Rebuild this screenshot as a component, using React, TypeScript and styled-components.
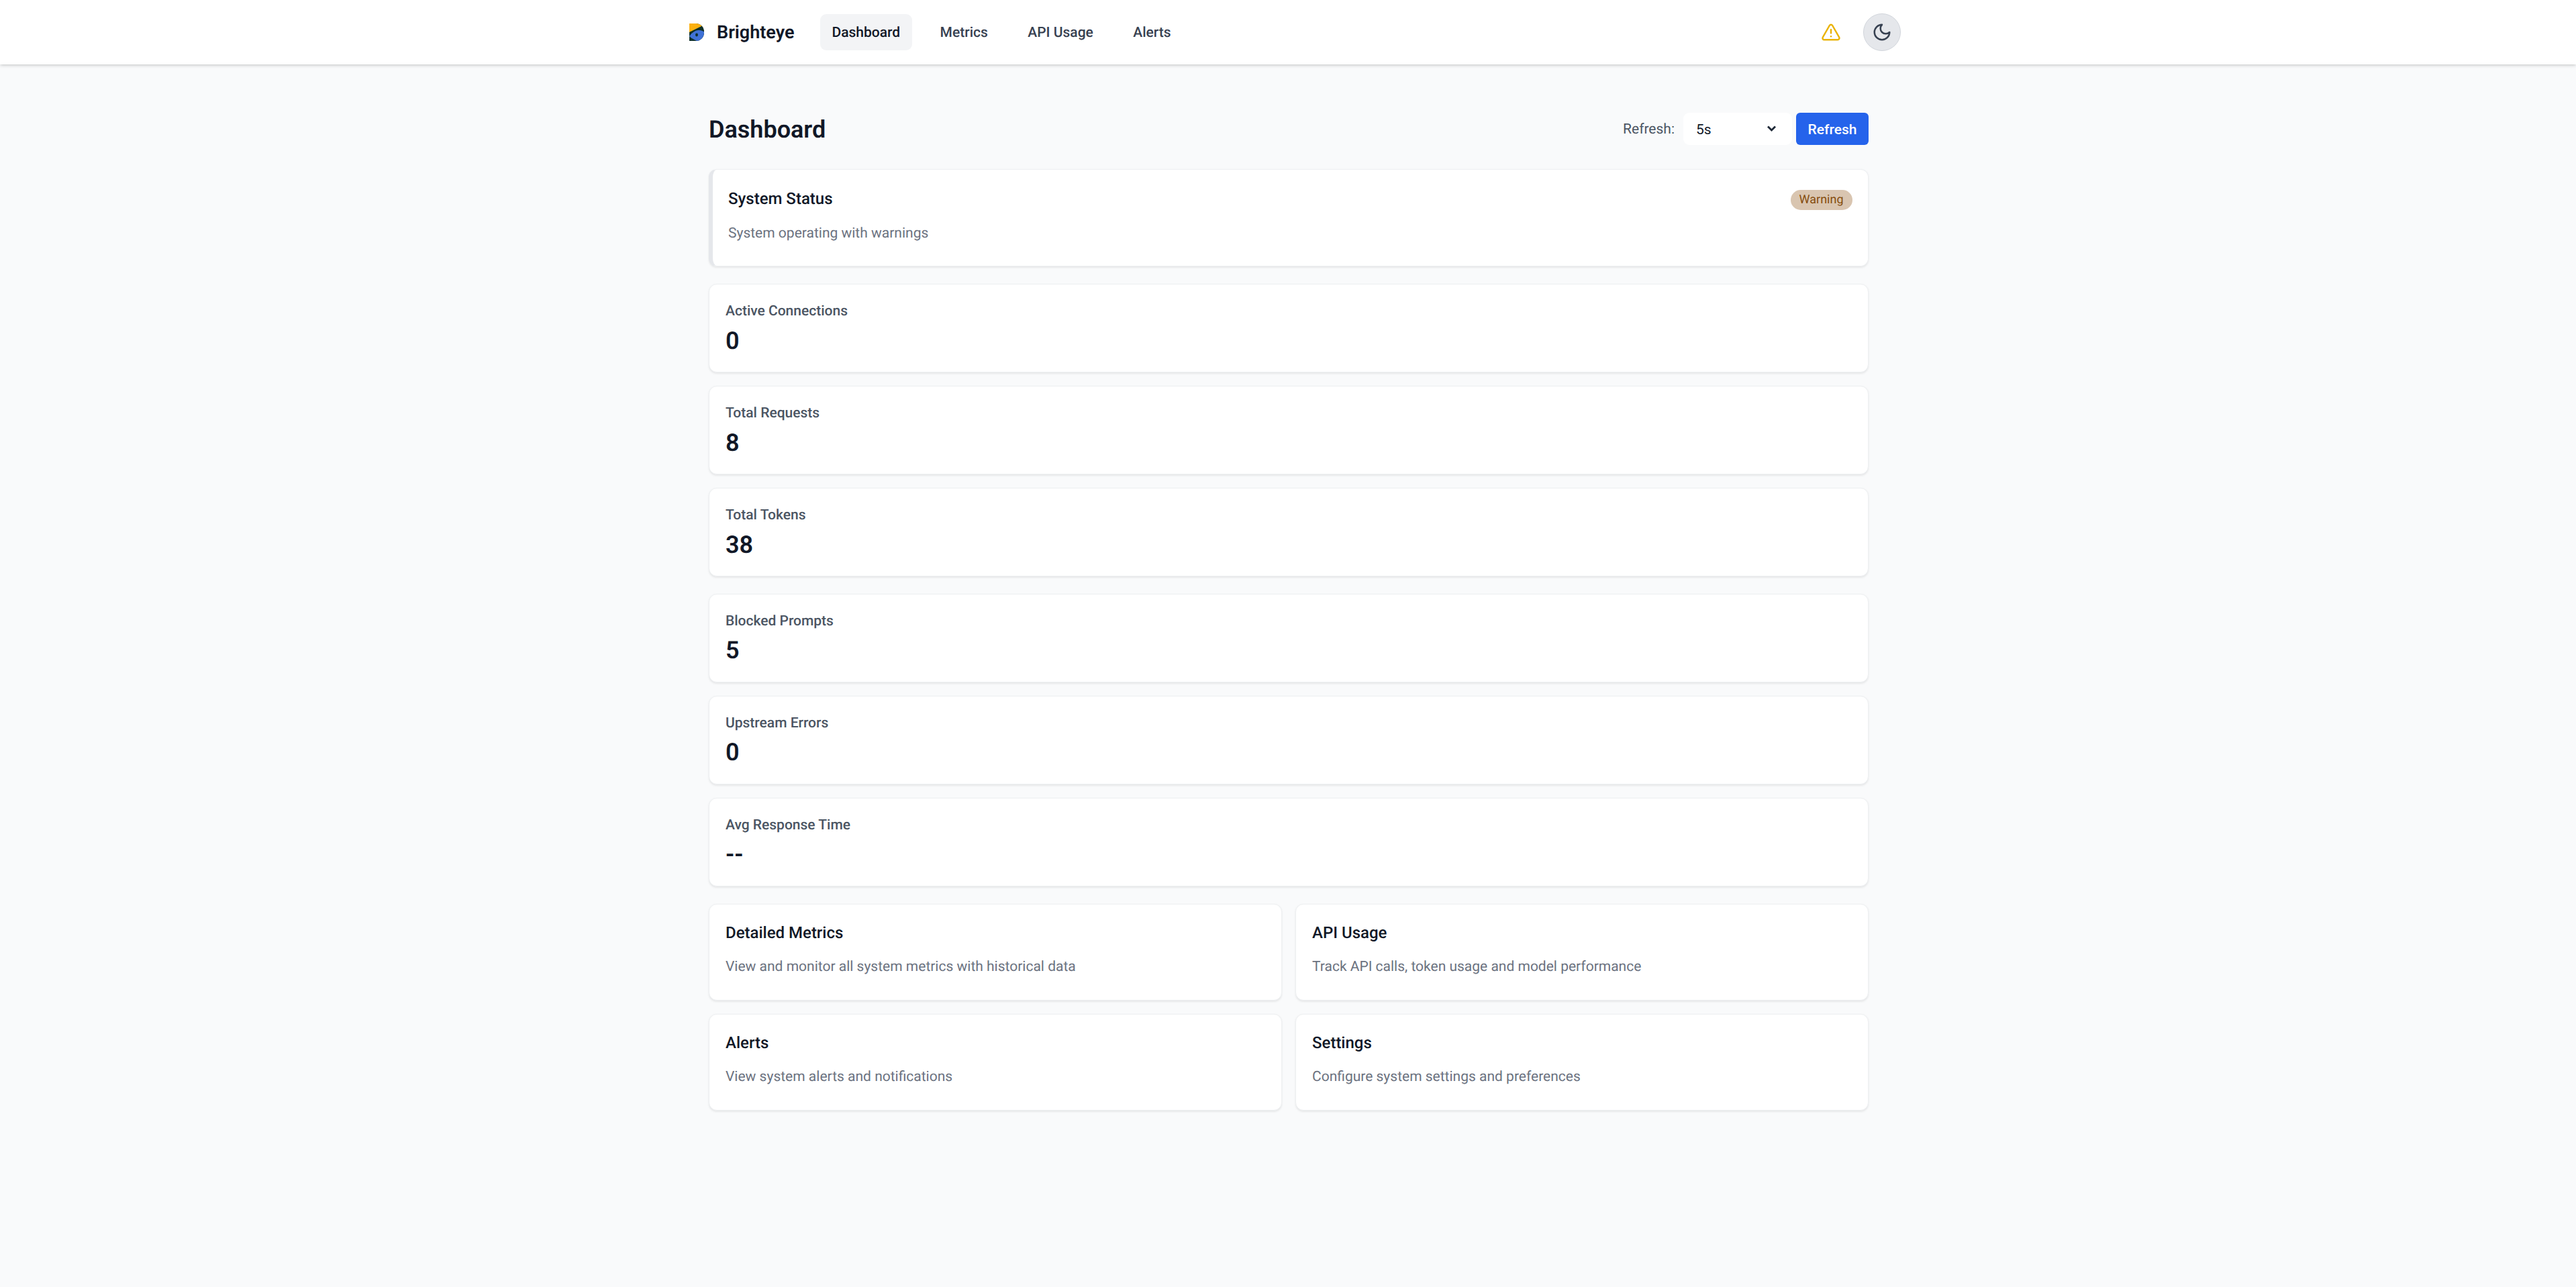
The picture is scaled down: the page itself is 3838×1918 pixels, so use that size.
import React from 'react';
import styled, { createGlobalStyle } from 'styled-components';

const GlobalStyle = createGlobalStyle`
  html, body {
    margin: 0;
    padding: 0;
    background: #f9fafb;
    font-family: Roboto, 'Noto Sans', sans-serif;
    text-rendering: geometricPrecision;
  }
  * { box-sizing: border-box; }
`;

const Page = styled.div`
  min-height: 100vh;
  background: #f9fafb;
`;

const Nav = styled.nav`
  height: 96px;
  background: #fff;
  box-shadow: 0 1.5px 4.5px rgba(0, 0, 0, 0.14), 0 1.5px 3px -1.5px rgba(0, 0, 0, 0.1);
`;

const NavInner = styled.div`
  width: 1920px;
  height: 100%;
  margin: 0 auto;
  padding: 0 47px 0 68px;
  display: flex;
  align-items: center;
  justify-content: space-between;
`;

const NavLeft = styled.div`
  display: flex;
  align-items: center;
`;

const Brand = styled.a`
  display: flex;
  align-items: center;
  gap: 19px;
  margin-right: 38px;
  font-size: 27px;
  font-weight: 600;
  color: #111827;
`;

const NavLinks = styled.div`
  display: flex;
  align-items: center;
  gap: 23.5px;
`;

const NavLink = styled.a<{ $active?: boolean }>`
  height: 54px;
  padding: 1px 18px 0;
  display: flex;
  align-items: center;
  border-radius: 9px;
  font-size: 21px;
  font-weight: 475;
  color: ${(p) => (p.$active ? '#111827' : '#374151')};
  background: ${(p) => (p.$active ? '#f3f4f6' : 'transparent')};
`;

const NavRight = styled.div`
  display: flex;
  align-items: center;
  gap: 33px;
`;

const ThemeButton = styled.button`
  width: 56px;
  height: 56px;
  padding: 0;
  border-radius: 50%;
  border: 1.5px solid #d1d5db;
  background: #e5e7eb;
  display: flex;
  align-items: center;
  justify-content: center;
`;

const Main = styled.main`
  width: 1730px;
  margin: 0 auto;
  padding: 72px 0 0 2px;
`;

const Header = styled.header`
  display: flex;
  align-items: center;
  justify-content: space-between;
  height: 48px;
  margin-bottom: 36px;
`;

const Title = styled.h1`
  margin: 1px 0 0;
  font-size: 36px;
  font-weight: 600;
  color: #111827;
`;

const Controls = styled.div`
  display: flex;
  align-items: center;
`;

const RefreshLabel = styled.label`
  padding-top: 1px;
  font-size: 21px;
  color: #4b5563;
  margin-right: 13px;
`;

const SelectWrap = styled.div`
  position: relative;
  width: 162px;
  height: 48px;
  margin-right: 6px;
`;

const Select = styled.select`
  appearance: none;
  display: block;
  width: 100%;
  height: 100%;
  padding: 2px 19px 0;
  border: none;
  border-radius: 9px;
  background: #fff;
  font-family: inherit;
  font-size: 21px;
  color: #111827;
`;

const Chevron = styled.svg`
  position: absolute;
  top: 18px;
  right: 23px;
  pointer-events: none;
`;

const RefreshButton = styled.button`
  width: 108px;
  height: 48px;
  padding: 1px 0 0;
  border: none;
  border-radius: 6px;
  background: #2563eb;
  color: #fff;
  font-family: inherit;
  font-size: 21px;
  font-weight: 500;
`;

const Card = styled.section`
  background: #fff;
  border: 1.5px solid #eef0f2;
  border-radius: 12px;
  box-shadow: 0 1.5px 3px rgba(0, 0, 0, 0.08);
`;

const StatusCard = styled(Card)`
  height: 145px;
  margin-bottom: 26px;
  padding: 24.5px 23.5px 0 23px;
  border-left: 6px solid #e5e7eb;
`;

const StatusTop = styled.div`
  display: flex;
  align-items: flex-start;
  justify-content: space-between;
`;

const CardTitle = styled.h3`
  margin: 0;
  font-size: 24px;
  font-weight: 475;
  line-height: 36px;
  color: #111827;
`;

const CardText = styled.p`
  margin: 17px 0 0;
  font-size: 21px;
  line-height: 32px;
  color: #6b7280;
`;

const StatusText = styled(CardText)`
  margin-top: 18px;
`;

const Badge = styled.span`
  height: 30px;
  margin-top: 5px;
  padding: 0 13px;
  border-radius: 15px;
  display: flex;
  align-items: center;
  background: #d9c5b0;
  color: #854d0e;
  font-size: 18px;
  font-weight: 450;
`;

const MetricList = styled.div`
  display: flex;
  flex-direction: column;
  gap: 25.5px;
  margin-bottom: 26.5px;
`;

const MetricGroup = styled.div`
  display: flex;
  flex-direction: column;
  gap: 20px;
`;

const MetricCard = styled(Card)`
  height: 132px;
  padding: 25px 24px 0;
`;

const MetricLabel = styled.div`
  font-size: 21px;
  font-weight: 475;
  line-height: 31.5px;
  color: #4b5563;
`;

const MetricValue = styled.div`
  margin-top: 3px;
  font-size: 36px;
  font-weight: 600;
  line-height: 48px;
  color: #111827;
`;

const LinkGrid = styled.div`
  display: grid;
  grid-template-columns: 1fr 1fr;
  gap: 20px;
`;

const LinkCard = styled(Card)`
  height: 144px;
  padding: 23.5px 24px 0;
`;

const metricGroups = [
  [
    { label: 'Active Connections', value: '0' },
    { label: 'Total Requests', value: '8' },
    { label: 'Total Tokens', value: '38' },
  ],
  [
    { label: 'Blocked Prompts', value: '5' },
    { label: 'Upstream Errors', value: '0' },
    { label: 'Avg Response Time', value: '--' },
  ],
];

const links = [
  { title: 'Detailed Metrics', text: 'View and monitor all system metrics with historical data' },
  { title: 'API Usage', text: 'Track API calls, token usage and model performance' },
  { title: 'Alerts', text: 'View system alerts and notifications' },
  { title: 'Settings', text: 'Configure system settings and preferences' },
];

const Logo = () => (
  <svg width="22" height="26" viewBox="0 0 22 26" aria-hidden="true">
    <path d="M0 0h10a12 12 0 0 1 12 12v2a12 12 0 0 1-12 12H0z" fill="#10312b" />
    <path d="M0 0h10c3.500 0 6.500 1.500 8.600 3.700L0 13z" fill="#fbb00f" />
    <path d="M0 19C4 13.500 8.500 10.500 13 10c3.500-.4 6.500.5 9 2.500V14a12 12 0 0 1-10.500 11.900C8 24.500 3 22 0 19z" fill="#3f71d6" />
    <ellipse cx="11" cy="17" rx="2" ry="2.400" fill="#10312b" />
  </svg>
);

const WarningIcon = () => (
  <svg width="30" height="30" viewBox="0 0 24 24" fill="none" stroke="#eab308" strokeWidth="2" strokeLinecap="round" strokeLinejoin="round" aria-hidden="true">
    <path d="m21.730 18-8-14a2 2 0 0 0-3.480 0l-8 14A2 2 0 0 0 4 21h16a2 2 0 0 0 1.730-3" />
    <path d="M12 9v4" />
    <path d="M12 17h.01" />
  </svg>
);

const MoonIcon = () => (
  <svg width="30" height="30" viewBox="0 0 24 24" fill="none" stroke="#374151" strokeWidth="2" strokeLinecap="round" strokeLinejoin="round" aria-hidden="true">
    <path d="M12 3a6 6 0 0 0 9 9 9 9 0 1 1-9-9Z" />
  </svg>
);

const App: React.FC = () => {
  return (
    <Page>
      <GlobalStyle />
      <Nav>
        <NavInner>
          <NavLeft>
            <Brand>
              <Logo />
              Brighteye
            </Brand>
            <NavLinks>
              <NavLink $active>Dashboard</NavLink>
              <NavLink>Metrics</NavLink>
              <NavLink>API Usage</NavLink>
              <NavLink>Alerts</NavLink>
            </NavLinks>
          </NavLeft>
          <NavRight>
            <WarningIcon />
            <ThemeButton>
              <MoonIcon />
            </ThemeButton>
          </NavRight>
        </NavInner>
      </Nav>
      <Main>
        <Header>
          <Title>Dashboard</Title>
          <Controls>
            <RefreshLabel>Refresh:</RefreshLabel>
            <SelectWrap>
              <Select defaultValue="5s">
                <option value="5s">5s</option>
              </Select>
              <Chevron width="15" height="11" viewBox="0 0 15 11" fill="none" stroke="#1f2937" strokeWidth="2.800" aria-hidden="true">
                <path d="M2 2.500l5.500 5.500L13 2.500" />
              </Chevron>
            </SelectWrap>
            <RefreshButton>Refresh</RefreshButton>
          </Controls>
        </Header>
        <StatusCard>
          <StatusTop>
            <CardTitle>System Status</CardTitle>
            <Badge>Warning</Badge>
          </StatusTop>
          <StatusText>System operating with warnings</StatusText>
        </StatusCard>
        <MetricList>
          {metricGroups.map((group) => (
            <MetricGroup key={group[0].label}>
              {group.map((m) => (
                <MetricCard key={m.label}>
                  <MetricLabel>{m.label}</MetricLabel>
                  <MetricValue>{m.value}</MetricValue>
                </MetricCard>
              ))}
            </MetricGroup>
          ))}
        </MetricList>
        <LinkGrid>
          {links.map((l) => (
            <LinkCard key={l.title}>
              <CardTitle>{l.title}</CardTitle>
              <CardText>{l.text}</CardText>
            </LinkCard>
          ))}
        </LinkGrid>
      </Main>
    </Page>
  );
};

export default App;
